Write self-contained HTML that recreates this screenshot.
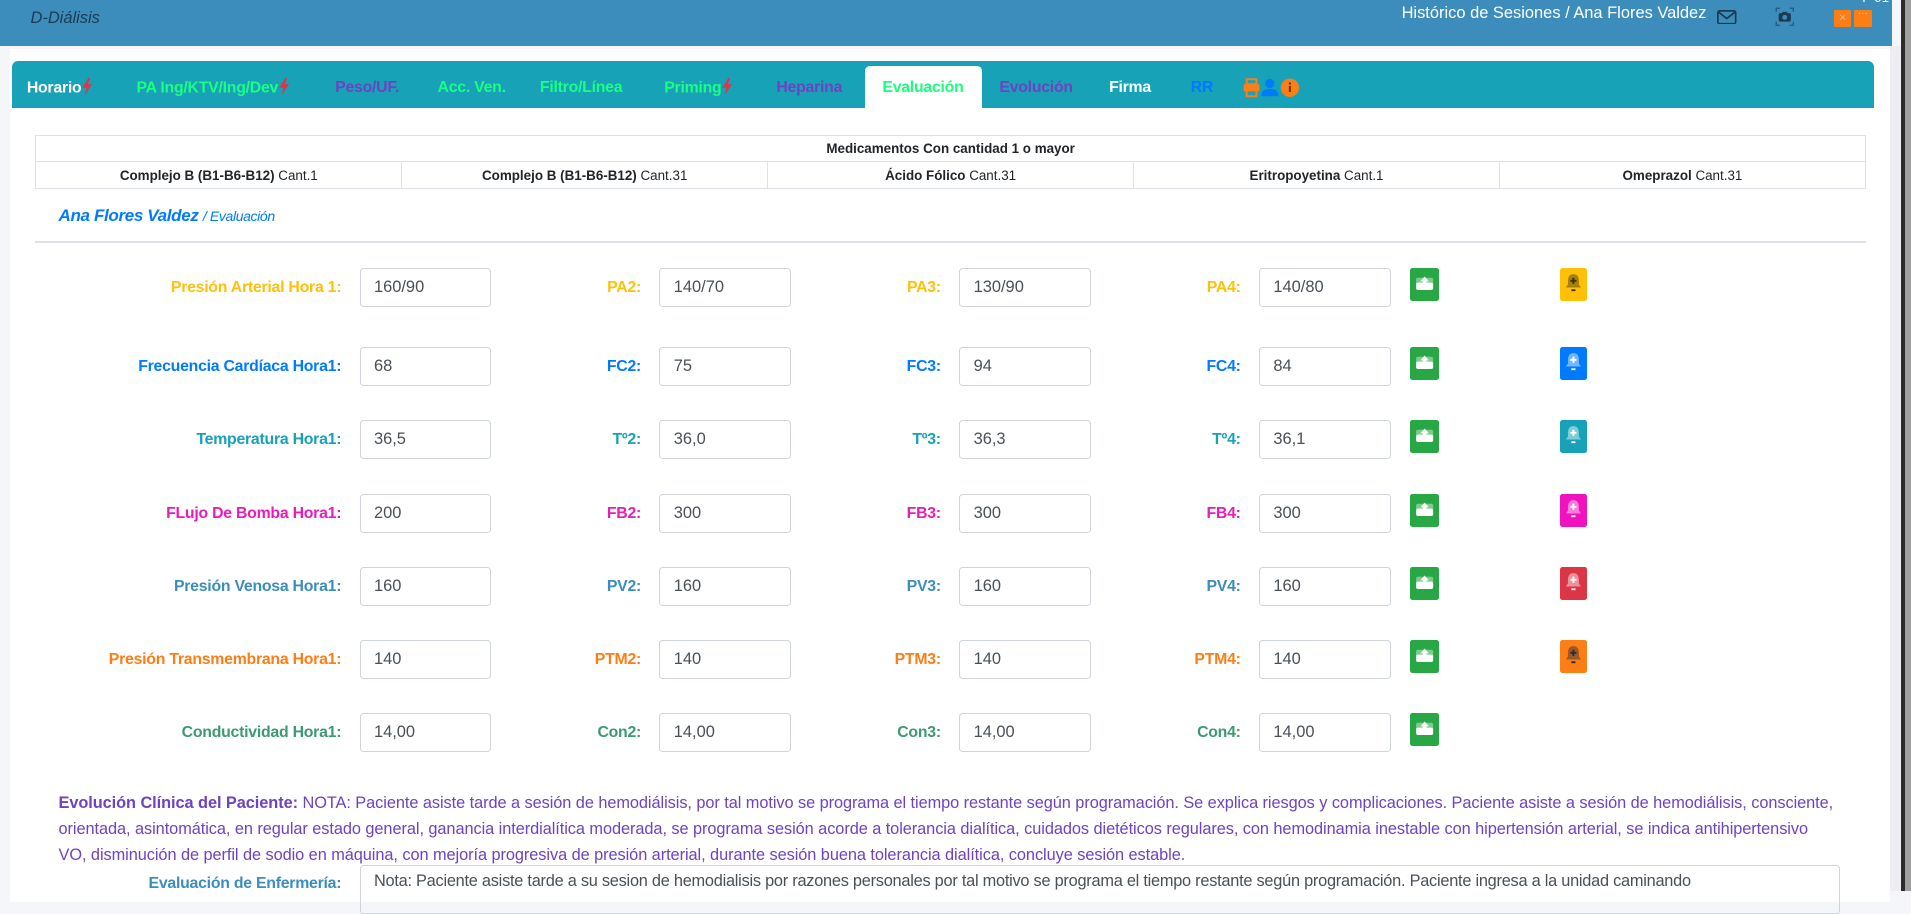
<!DOCTYPE html>
<html><head><meta charset="utf-8">
<style>
html{zoom:1.21875;}
body{margin:0;width:1568px;height:731px;overflow:hidden;background:#f4f6f9;font-family:"Liberation Sans",sans-serif;position:relative;}
.a{position:absolute;}
.hdr{left:0;top:0;width:1552px;height:38px;background:#3c8dbc;}
.card{left:8px;top:40px;width:1543px;height:700px;background:#fff;}
.tabs{left:10px;top:50px;width:1528px;height:39px;background:#17a2b8;border-radius:5px 5px 0 0;}
.tab{top:64px;font-size:13px;line-height:16px;font-weight:bold;white-space:nowrap;letter-spacing:-0.2px}
.g{color:#1aff80}.p{color:#6f42c1}
.bolt{display:inline-block;width:9px;height:14px;vertical-align:-2px}
table.m{position:absolute;left:29px;top:111px;width:1502px;border-collapse:collapse;font-size:11px;color:#212529;table-layout:fixed}
table.m td{border:1px solid #dee2e6;text-align:center;height:20px;padding:0;white-space:nowrap}
.lbl{font-size:13px;font-weight:bold;text-align:right;width:260px;white-space:nowrap;letter-spacing:-0.2px}
.inp{border:1px solid #ced4da;border-radius:3px;font-size:13.5px;color:#495057;line-height:30px;padding-left:11px;box-sizing:border-box;width:108px;height:32px;}
.gb{width:24px;height:27px;background:#28a745;border-radius:2px;}
.bell{width:22px;height:27px;border-radius:2px;}
.evo{left:48px;top:648px;width:1480px;font-size:13.4px;line-height:21.5px;color:#6f42c1;letter-spacing:-0.05px;white-space:nowrap}
</style></head><body>
<svg width="0" height="0" style="position:absolute"><defs>
<g id="up"><rect x="5" y="8" width="14" height="6" rx="1.5" fill="#fff" opacity="0.4"/><rect x="5" y="12" width="14" height="6" rx="1.5" fill="#fff"/><path d="M12 7 L8.5 11 H10.5 V14 H13.5 V11 H15.5Z" fill="#fff"/></g>
<g id="bl"><path d="M11 5c-3.3 0-4.5 2.5-4.5 5.5v3L4.8 16h12.4l-1.7-2.5v-3C15.5 7.5 14.3 5 11 5z" fill="currentColor" opacity="0.45"/><path d="M11 8v5M8.5 10.5h5" stroke="currentColor" stroke-width="1.6"/><rect x="9.3" y="17.5" width="3.4" height="1.5" fill="currentColor"/></g>
<path id="bt" d="M6 0 L1 8 H4.5 L3 14 L9 5 H5.5 L7.5 0Z" fill="#dc3545"/>
</defs></svg>
<div class="a hdr"></div>
<div class="a" style="left:25px;top:7px;font-size:13.5px;font-style:italic;color:#1c3a52;">D-Diálisis</div>
<div class="a" style="left:1150px;top:3px;font-size:13.5px;color:#fff;">Histórico de Sesiones / Ana Flores Valdez</div>
<svg class="a" style="left:1409px;top:8px" width="16" height="12" viewBox="0 0 16 12"><rect x="0.7" y="0.7" width="14.6" height="10.6" rx="1.5" fill="none" stroke="#1c3a52" stroke-width="1.4"/><path d="M1 1.5 L8 7 L15 1.5" fill="none" stroke="#1c3a52" stroke-width="1.4"/></svg>
<svg class="a" style="left:1456px;top:6px" width="16" height="16" viewBox="0 0 16 16"><path d="M1 4V1H4M12 1H15V4M15 12V15H12M4 15H1V12" fill="none" stroke="#2b5577" stroke-width="1"/><rect x="3" y="5" width="10" height="7" rx="1.5" fill="#1c3a52"/><rect x="6" y="4" width="4" height="2" fill="#1c3a52"/><circle cx="8" cy="8.5" r="2" fill="#3c8dbc"/></svg>
<div class="a" style="left:1505px;top:8px;width:14px;height:14px;background:#fd7e14;border-radius:1px;color:#c8d0e0;font-size:9px;text-align:center;line-height:14px">×</div>
<div class="a" style="left:1521px;top:8px;width:15px;height:14px;background:#fd7e14;border-radius:1px;color:#ddd;font-size:8px;text-align:center;line-height:6px">···</div>
<div class="a" style="left:1528px;top:-8px;font-size:11px;color:#fff">F 01</div>
<div class="a" style="left:1551px;top:38px;width:9px;height:693px;background:#eeeef2"></div>
<div class="a" style="left:1560px;top:0;width:8px;height:731px;background:#2b2b2b"></div>
<div class="a" style="left:1563px;top:0;width:5px;height:731px;background:#a0a0a0"></div>
<div class="a card"></div>
<div class="a tabs"></div>
<div class="a" style="left:710px;top:54px;width:96px;height:35px;background:#fff;border-radius:4px 4px 0 0"></div>
<div class="a tab" style="left:22px;color:#fff">Horario<svg class="bolt" viewBox="0 0 9 14"><use href="#bt"/></svg></div>
<div class="a tab g" style="left:112px">PA Ing/KTV/Ing/Dev<svg class="bolt" viewBox="0 0 9 14"><use href="#bt"/></svg></div>
<div class="a tab p" style="left:275px">Peso/UF.</div>
<div class="a tab g" style="left:359px">Acc. Ven.</div>
<div class="a tab g" style="left:443px">Filtro/Línea</div>
<div class="a tab g" style="left:545px">Priming<svg class="bolt" viewBox="0 0 9 14"><use href="#bt"/></svg></div>
<div class="a tab p" style="left:637px">Heparina</div>
<div class="a tab g" style="left:724px">Evaluación</div>
<div class="a tab p" style="left:820px">Evolución</div>
<div class="a tab" style="left:910px;color:#fff">Firma</div>
<div class="a tab" style="left:977px;color:#007bff">RR</div>
<svg class="a" style="left:1020px;top:64px" width="48" height="16" viewBox="0 0 48 16"><rect x="3" y="1" width="8" height="4" fill="none" stroke="#fd7e14" stroke-width="1.6"/><rect x="0.5" y="5" width="13" height="6" rx="1" fill="#fd7e14"/><rect x="3" y="10" width="8" height="5" fill="none" stroke="#fd7e14" stroke-width="1.6"/><circle cx="22" cy="4.5" r="3.8" fill="#007bff"/><path d="M15 15c0-5 3-6 7-6s7 1 7 6z" fill="#007bff"/><circle cx="38.5" cy="8" r="7.5" fill="#fd7e14"/><rect x="37.6" y="6.5" width="1.8" height="5" fill="#6b3a10"/><circle cx="38.5" cy="4.5" r="1" fill="#6b3a10"/></svg>
<table class="m"><tr><td colspan="5" style="font-weight:bold">Medicamentos Con cantidad 1 o mayor</td></tr>
<tr><td style="height:22px"><b>Complejo B (B1-B6-B12)</b> Cant.1</td><td><b>Complejo B (B1-B6-B12)</b> Cant.31</td><td><b>Ácido Fólico</b> Cant.31</td><td><b>Eritropoyetina</b> Cant.1</td><td><b>Omeprazol</b> Cant.31</td></tr></table>
<div class="a" style="left:48px;top:169px;color:#007bff;font-style:italic;font-size:14px;letter-spacing:-0.3px"><b style="font-weight:600">Ana Flores Valdez</b> <span style="font-size:11.5px">/ Evaluación</span></div>
<div class="a" style="left:29px;top:198px;width:1502px;height:1px;background:#dee2e6"></div>

<div class="a" style="left:20px;top:229px;color:#ffc107" ><div class="a lbl" style="left:0">Presión Arterial Hora 1:</div><div class="a lbl" style="left:246px">PA2:</div><div class="a lbl" style="left:492px">PA3:</div><div class="a lbl" style="left:738px">PA4:</div></div>
<div class="a" style="left:20px;top:294px;color:#007bff"><div class="a lbl" style="left:0">Frecuencia Cardíaca Hora1:</div><div class="a lbl" style="left:246px">FC2:</div><div class="a lbl" style="left:492px">FC3:</div><div class="a lbl" style="left:738px">FC4:</div></div>
<div class="a" style="left:20px;top:354px;color:#17a2b8"><div class="a lbl" style="left:0">Temperatura Hora1:</div><div class="a lbl" style="left:246px">Tº2:</div><div class="a lbl" style="left:492px">Tº3:</div><div class="a lbl" style="left:738px">Tº4:</div></div>
<div class="a" style="left:20px;top:414px;color:#e81cb8"><div class="a lbl" style="left:0">FLujo De Bomba Hora1:</div><div class="a lbl" style="left:246px">FB2:</div><div class="a lbl" style="left:492px">FB3:</div><div class="a lbl" style="left:738px">FB4:</div></div>
<div class="a" style="left:20px;top:474px;color:#3c8dbc"><div class="a lbl" style="left:0">Presión Venosa Hora1:</div><div class="a lbl" style="left:246px">PV2:</div><div class="a lbl" style="left:492px">PV3:</div><div class="a lbl" style="left:738px">PV4:</div></div>
<div class="a" style="left:20px;top:534px;color:#fd7e14"><div class="a lbl" style="left:0">Presión Transmembrana Hora1:</div><div class="a lbl" style="left:246px">PTM2:</div><div class="a lbl" style="left:492px">PTM3:</div><div class="a lbl" style="left:738px">PTM4:</div></div>
<div class="a" style="left:20px;top:594px;color:#3d9970"><div class="a lbl" style="left:0">Conductividad Hora1:</div><div class="a lbl" style="left:246px">Con2:</div><div class="a lbl" style="left:492px">Con3:</div><div class="a lbl" style="left:738px">Con4:</div></div>

<div class="a inp" style="left:295px;top:220px">160/90</div><div class="a inp" style="left:541px;top:220px">140/70</div><div class="a inp" style="left:787px;top:220px">130/90</div><div class="a inp" style="left:1033px;top:220px">140/80</div>
<div class="a inp" style="left:295px;top:285px">68</div><div class="a inp" style="left:541px;top:285px">75</div><div class="a inp" style="left:787px;top:285px">94</div><div class="a inp" style="left:1033px;top:285px">84</div>
<div class="a inp" style="left:295px;top:345px">36,5</div><div class="a inp" style="left:541px;top:345px">36,0</div><div class="a inp" style="left:787px;top:345px">36,3</div><div class="a inp" style="left:1033px;top:345px">36,1</div>
<div class="a inp" style="left:295px;top:405px">200</div><div class="a inp" style="left:541px;top:405px">300</div><div class="a inp" style="left:787px;top:405px">300</div><div class="a inp" style="left:1033px;top:405px">300</div>
<div class="a inp" style="left:295px;top:465px">160</div><div class="a inp" style="left:541px;top:465px">160</div><div class="a inp" style="left:787px;top:465px">160</div><div class="a inp" style="left:1033px;top:465px">160</div>
<div class="a inp" style="left:295px;top:525px">140</div><div class="a inp" style="left:541px;top:525px">140</div><div class="a inp" style="left:787px;top:525px">140</div><div class="a inp" style="left:1033px;top:525px">140</div>
<div class="a inp" style="left:295px;top:585px">14,00</div><div class="a inp" style="left:541px;top:585px">14,00</div><div class="a inp" style="left:787px;top:585px">14,00</div><div class="a inp" style="left:1033px;top:585px">14,00</div>

<svg class="a gb" style="left:1157px;top:220px" viewBox="0 0 24 27"><use href="#up"/></svg>
<svg class="a gb" style="left:1157px;top:285px" viewBox="0 0 24 27"><use href="#up"/></svg>
<svg class="a gb" style="left:1157px;top:345px" viewBox="0 0 24 27"><use href="#up"/></svg>
<svg class="a gb" style="left:1157px;top:405px" viewBox="0 0 24 27"><use href="#up"/></svg>
<svg class="a gb" style="left:1157px;top:465px" viewBox="0 0 24 27"><use href="#up"/></svg>
<svg class="a gb" style="left:1157px;top:525px" viewBox="0 0 24 27"><use href="#up"/></svg>
<svg class="a gb" style="left:1157px;top:585px" viewBox="0 0 24 27"><use href="#up"/></svg>
<svg class="a bell" style="left:1280px;top:220px;background:#ffc107;color:#3a3010" viewBox="0 0 22 27"><use href="#bl"/></svg>
<svg class="a bell" style="left:1280px;top:285px;background:#007bff;color:#fff" viewBox="0 0 22 27"><use href="#bl"/></svg>
<svg class="a bell" style="left:1280px;top:345px;background:#17a2b8;color:#fff" viewBox="0 0 22 27"><use href="#bl"/></svg>
<svg class="a bell" style="left:1280px;top:405px;background:#f012be;color:#fff" viewBox="0 0 22 27"><use href="#bl"/></svg>
<svg class="a bell" style="left:1280px;top:465px;background:#dc3545;color:#fff" viewBox="0 0 22 27"><use href="#bl"/></svg>
<svg class="a bell" style="left:1280px;top:525px;background:#fd7e14;color:#2a2a3a" viewBox="0 0 22 27"><use href="#bl"/></svg>

<div class="a evo"><b>Evolución Clínica del Paciente:</b> NOTA: Paciente asiste tarde a sesión de hemodiálisis, por tal motivo se programa el tiempo restante según programación. Se explica riesgos y complicaciones. Paciente asiste a sesión de hemodiálisis, consciente,<br>orientada, asintomática, en regular estado general, ganancia interdialítica moderada, se programa sesión acorde a tolerancia dialítica, cuidados dietéticos regulares, con hemodinamia inestable con hipertensión arterial, se indica antihipertensivo<br>VO, disminución de perfil de sodio en máquina, con mejoría progresiva de presión arterial, durante sesión buena tolerancia dialítica, concluye sesión estable.</div>
<div class="a lbl" style="left:20px;top:718px;color:#3c8dbc">Evaluación de Enfermería:</div>
<div class="a" style="left:295px;top:710px;width:1215px;height:40px;border:1px solid #ced4da;border-radius:3px;box-sizing:border-box;padding:5px 11px;font-size:13.4px;color:#495057;letter-spacing:-0.2px;white-space:nowrap;overflow:hidden">Nota: Paciente asiste tarde a su sesion de hemodialisis por razones personales por tal motivo se programa el tiempo restante según programación. Paciente ingresa a la unidad caminando</div>
</body></html>
